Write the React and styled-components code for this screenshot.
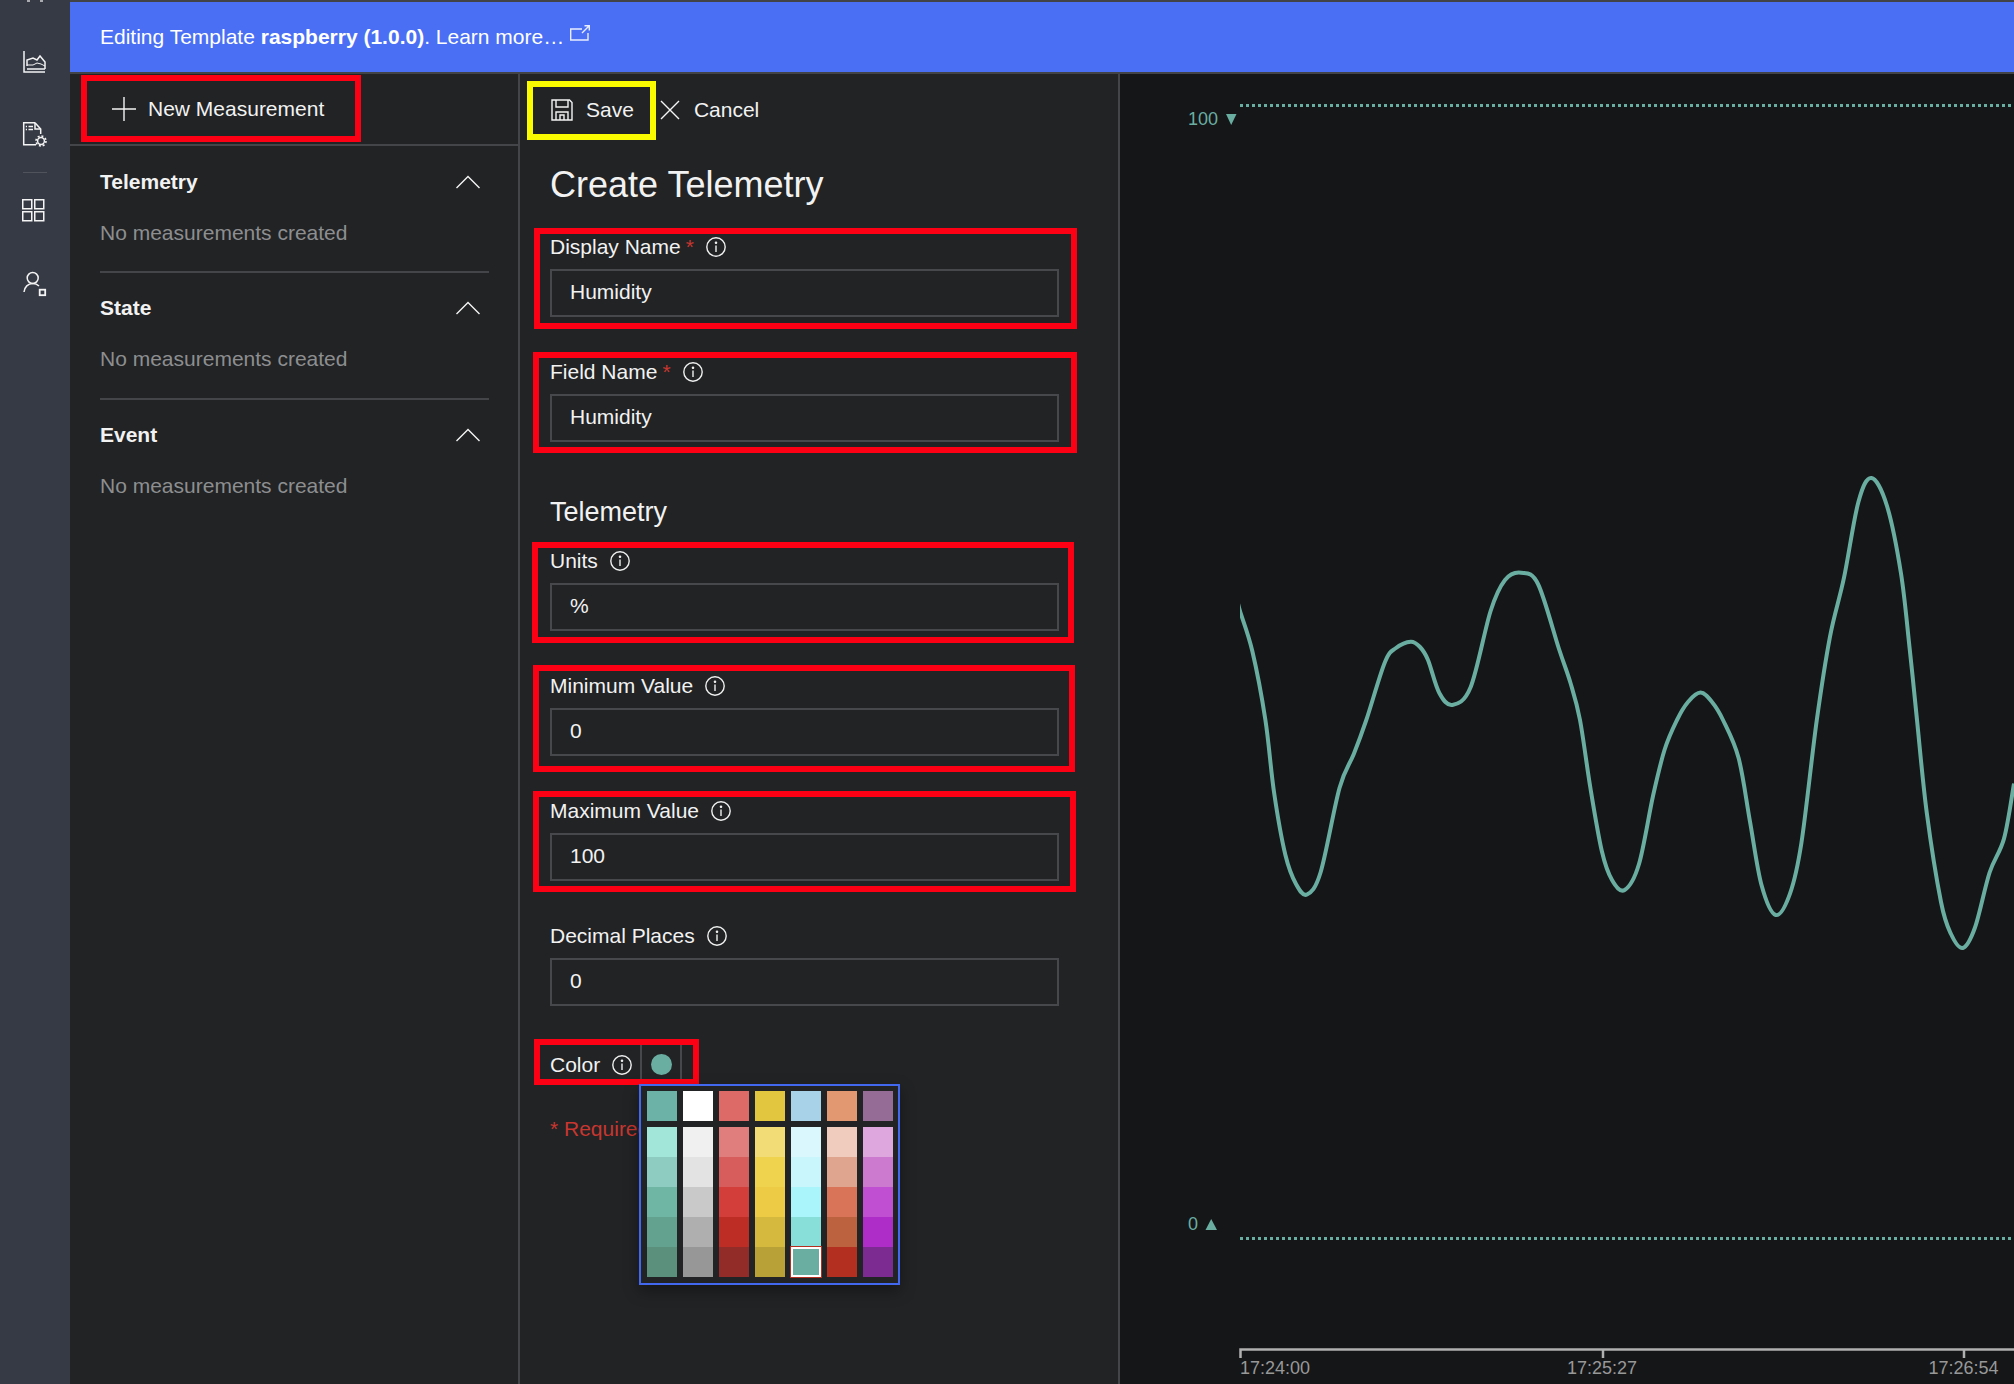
import React from "react";
import styled, { createGlobalStyle } from "styled-components";

const GlobalStyle = createGlobalStyle`
  html, body {
    margin: 0;
    padding: 0;
    background: #212325;
    font-family: "Liberation Sans", Arial, sans-serif;
  }
  * { box-sizing: border-box; }
`;

const Page = styled.div`
  display: flex;
  width: 2014px;
  height: 1384px;
  overflow: hidden;
  color: #f2f2f2;
  font-size: 21px;
`;

const Nav = styled.nav`
  display: flex;
  flex: 0 0 70px;
  flex-direction: column;
  align-items: center;
  background: #363a44;
`;

const NavItem = styled.div`
  display: flex;
  height: 73px;
  align-items: center;
  justify-content: center;
`;

const TopSliver = styled.div`
  display: flex;
  gap: 10px;
  height: 2px;
  margin-bottom: 22.5px;
`;

const SliverMark = styled.span`
  width: 3px;
  height: 2px;
  background: #a9abaf;
`;

const NavRule = styled.div`
  width: 24px;
  height: 1px;
  margin: 1px 0 2px;
  background: #50535b;
`;

const Main = styled.div`
  display: flex;
  flex: 1;
  flex-direction: column;
  min-width: 0;
`;

const Banner = styled.div`
  display: flex;
  flex: 0 0 74px;
  align-items: center;
  padding-left: 30px;
  border-top: 2px solid #414347;
  border-bottom: 2px solid #414347;
  background: #4a6ff4;
  color: #fff;

  b { white-space: pre; }
`;

const ExternalIcon = styled.svg`
  margin: -9px 0 0 6px;
`;

const Columns = styled.div`
  display: flex;
  flex: 1;
  min-height: 0;
`;

const LeftPanel = styled.aside`
  flex: 0 0 450px;
  border-right: 2px solid #444548;
  background: #212325;
`;

const LeftToolbar = styled.div`
  position: relative;
  display: flex;
  height: 72px;
  align-items: center;
  gap: 12px;
  padding-left: 42px;
  border-bottom: 2px solid #444548;
`;

const AccordionList = styled.div`
  padding: 1px 29px 0 30px;
`;

const Section = styled.section`
  height: 126px;
  border-bottom: ${(p) => (p.$last ? "none" : "2px solid #444548")};

  &:nth-child(2) { height: 127px; }
`;

const SectionHead = styled.div`
  display: flex;
  height: 70px;
  align-items: center;
  justify-content: space-between;
  padding-right: 9px;
  font-weight: 700;
`;

const EmptyNote = styled.div`
  margin-top: 2px;
  color: #8d8e90;
  line-height: 28px;
`;

const MiddlePanel = styled.div`
  flex: 0 0 600px;
  border-right: 2px solid #444548;
  background: #212325;
`;

const MiddleToolbar = styled.div`
  position: relative;
  display: flex;
  height: 72px;
  align-items: center;
  padding-left: 31px;
`;

const ToolButton = styled.div`
  display: flex;
  align-items: center;
  gap: ${(p) => p.$gap}px;
  margin-right: ${(p) => p.$after || 0}px;
`;

const Form = styled.div`
  padding: 17px 59px 0 30px;
`;

const Title = styled.h1`
  height: 44px;
  margin: 0 0 24px;
  font-size: 36px;
  font-weight: 400;
  line-height: 44px;
`;

const SubTitle = styled.h2`
  height: 36px;
  margin: 52px 0 15px;
  font-size: 27px;
  font-weight: 400;
  line-height: 36px;
`;

const Field = styled.div`
  position: relative;
  display: flex;
  height: 86px;
  flex-direction: column;
  gap: 6px;
  margin-bottom: 39px;

  &:has(+ h2) { margin-bottom: 0; }
`;

const LabelRow = styled.div`
  display: flex;
  height: 32px;
  align-items: center;
`;

const Required = styled.span`
  margin-left: 5px;
  color: #c8362f;
`;

const InfoIcon = styled.svg`
  flex: none;
  margin-left: 12px;
`;

const TextInput = styled.input`
  width: 100%;
  height: 48px;
  padding: 0 18px 2px;
  border: 2px solid #47484b;
  background: transparent;
  color: #f2f2f2;
  font: inherit;
  outline: none;
`;

const Highlight = styled.div`
  position: absolute;
  top: ${(p) => p.$top}px;
  right: ${(p) => p.$right}px;
  bottom: ${(p) => p.$bottom}px;
  left: ${(p) => p.$left}px;
  border: 6px solid ${(p) => p.$color || "#fe0013"};
  pointer-events: none;
`;

const ColorRow = styled.div`
  position: relative;
  display: flex;
  height: 40px;
  align-items: center;
  margin-top: 1px;
`;

const ColorButton = styled.div`
  display: flex;
  align-self: flex-start;
  width: 42px;
  height: 34px;
  align-items: center;
  justify-content: center;
  margin-left: 8px;
  padding-top: 4px;
  border-right: 2px solid #47484b;
  border-left: 2px solid #47484b;
`;

const ColorDot = styled.span`
  width: 21px;
  height: 21px;
  border-radius: 50%;
  background: #6aaea2;
`;

const Popup = styled.div`
  position: absolute;
  z-index: 2;
  top: 39px;
  left: 89px;
  width: 261px;
  height: 201px;
  padding: 5px 6px;
  border: 2px solid #4268f0;
  background: #212325;
  box-shadow: 0 6px 14px rgba(0, 0, 0, 0.35);
`;

const SwatchRow = styled.div`
  display: grid;
  grid-template-columns: repeat(7, 30px);
  column-gap: 6px;
  margin-bottom: 6px;
`;

const Ramp = styled.div`
  display: flex;
  flex-direction: column;
`;

const Swatch = styled.div`
  height: 30px;
  background: ${(p) => p.$color};
  ${(p) =>
    p.$selected &&
    `
    position: relative;
    z-index: 1;
    margin: -1px;
    height: 32px;
    border: 3px solid #fff;
    outline: 1px solid #b33020;
    outline-offset: -1px;
  `}
`;

const RequiredNote = styled.div`
  margin-top: 30px;
  color: #c8362f;
  line-height: 28px;
`;

const ChartPanel = styled.div`
  flex: 1;
  min-width: 0;
  background: #151618;
`;

const ChartSvg = styled.svg`
  display: block;
  width: 100%;
  height: 100%;
  font-size: 18px;
`;

const CURVE = [
  [1236, 594], [1239.7, 610], [1252.3, 651], [1265.4, 720], [1274, 792], [1285.4, 855], [1296, 884],
  [1307, 894.5], [1320.7, 872], [1339.5, 788], [1353.8, 754], [1366.3, 720], [1385, 662], [1396, 648],
  [1410.8, 641.7], [1420, 647], [1428, 660], [1439.3, 693], [1452.4, 705], [1470.7, 687], [1490.6, 611],
  [1505, 580], [1521, 572.7], [1538, 584], [1559, 649], [1570.5, 683], [1580, 720], [1590.4, 788],
  [1601.8, 851], [1612, 880], [1624.6, 890], [1639, 864], [1653, 796], [1664.5, 750], [1677, 720],
  [1688, 702], [1700.5, 692.6], [1712, 702], [1723, 720], [1738.6, 758], [1750, 821.6], [1761.5, 885],
  [1775.7, 915], [1790, 893.6], [1801.4, 843], [1816.8, 720], [1830, 636.6], [1844, 577.7],
  [1858.4, 502], [1871.5, 478], [1887, 506], [1901, 573.5], [1909.7, 649], [1917, 720], [1926.8, 813],
  [1941, 902], [1951, 934], [1962.8, 948], [1975, 927.5], [1989.6, 872.5], [2004, 838.6], [2014, 783.5],
];

// catmull-rom through the traced points
const smoothPath = (pts) => {
  let d = `M${pts[0][0]} ${pts[0][1]}`;
  for (let i = 0; i < pts.length - 1; i++) {
    const p0 = pts[i - 1] || pts[i];
    const p1 = pts[i];
    const p2 = pts[i + 1];
    const p3 = pts[i + 2] || p2;
    const c1x = p1[0] + (p2[0] - p0[0]) / 6;
    const c1y = p1[1] + (p2[1] - p0[1]) / 6;
    const c2x = p2[0] - (p3[0] - p1[0]) / 6;
    const c2y = p2[1] - (p3[1] - p1[1]) / 6;
    d += `C${c1x.toFixed(1)} ${c1y.toFixed(1)} ${c2x.toFixed(1)} ${c2y.toFixed(1)} ${p2[0]} ${p2[1]}`;
  }
  return d;
};

const TOP_SWATCHES = ["#6cb2a6", "#ffffff", "#dd6a66", "#e3c640", "#a8d2e8", "#e29870", "#956c96"];
const RAMPS = [
  ["#a2e6da", "#8ecbc1", "#6fb7a4", "#62a28f", "#5a907c"],
  ["#f0f0f0", "#e3e3e3", "#c9c9c9", "#afafaf", "#979797"],
  ["#e07e7e", "#d75c5c", "#d33e3a", "#be2c26", "#922c29"],
  ["#f2dc75", "#efd34e", "#eecb44", "#d4b93e", "#b8a237"],
  ["#dbf7fe", "#c9f6fc", "#aaf5fc", "#88dfd9", "#6aaea2"],
  ["#f0ccbe", "#e0a58e", "#d97458", "#bd623e", "#b33020"],
  ["#dea8df", "#cc7ad0", "#c04fd2", "#ae2cc8", "#7c2c90"],
];

const Icon = ({ size = 30, children, ...rest }) => (
  <svg
    width={size}
    height={size}
    viewBox={`0 0 ${size} ${size}`}
    fill="none"
    stroke="#f4f4f4"
    strokeWidth="1.5"
    {...rest}
  >
    {children}
  </svg>
);

const Info = () => (
  <InfoIcon width="20" height="20" viewBox="0 0 20 20" fill="none" stroke="#f0f0f0" strokeWidth="1.4">
    <circle cx="10" cy="10" r="9.2" />
    <path d="M10 8.5V15" />
    <circle cx="10" cy="5.8" r="0.6" fill="#f0f0f0" />
  </InfoIcon>
);

const Chevron = () => (
  <Icon size={24} strokeWidth="1.4" height="14" viewBox="0 0 24 14">
    <path d="M0.5 13L12 1.5L23.5 13" />
  </Icon>
);

const Accordion = ({ title, last }) => (
  <Section $last={last}>
    <SectionHead>
      {title}
      <Chevron />
    </SectionHead>
    <EmptyNote>No measurements created</EmptyNote>
  </Section>
);

const FormField = ({ label, required, value, box }) => (
  <Field>
    <LabelRow>
      {label}
      {required && <Required>*</Required>}
      <Info />
    </LabelRow>
    <TextInput readOnly value={value} />
    {box && <Highlight $top={box[0]} $right={box[1]} $bottom={box[2]} $left={box[3]} />}
  </Field>
);

const Chart = () => (
  <ChartSvg viewBox="1120 74 894 1310">
    <defs>
      <clipPath id="plot">
        <rect x="1240" y="74" width="774" height="1310" />
      </clipPath>
    </defs>
    <path d="M1240 105.5H2014M1240 1238.5H2014" stroke="#6aaea2" strokeWidth="3" strokeDasharray="3 3" />
    <path d={smoothPath(CURVE)} fill="none" stroke="#6aaea2" strokeWidth="4" clipPath="url(#plot)" />
    <g fill="#6aaea2">
      <text x="1188" y="125">100</text>
      <path d="M1226 114H1236.5L1231.2 125Z" />
      <text x="1188" y="1230">0</text>
      <path d="M1205.5 1230H1217L1211.2 1219Z" />
    </g>
    <path d="M1240.5 1358V1349.5H2014M1603 1349.5V1358M1964 1349.5V1358" fill="none" stroke="#b0b0b0" strokeWidth="2.5" />
    <g fill="#989898">
      <text x="1240" y="1374">17:24:00</text>
      <text x="1567" y="1374">17:25:27</text>
      <text x="1928.5" y="1374">17:26:54</text>
    </g>
  </ChartSvg>
);

export default function App() {
  return (
    <Page>
      <GlobalStyle />
      <Nav>
        <TopSliver>
          <SliverMark />
          <SliverMark />
        </TopSliver>
        <NavItem>
          <Icon>
            <path d="M4 5V26H25" />
            <path d="M7 23H25" />
            <path d="M7 20V14L13 12L17 14L20 10L25 16V23" />
            <path d="M7 19H13L17 17L21 18L25 20" strokeWidth="1" />
          </Icon>
        </NavItem>
        <NavItem>
          <Icon>
            <path d="M15 3.7H3.7V25.7H16" />
            <path d="M15 3.7L20.7 10V15" />
            <path d="M15 3.7V10H20.7" />
            <path d="M5.8 7.5H7M8.5 7.5H13M5.8 10.5H7M8.5 10.5H13" />
            <circle cx="21" cy="22" r="3.4" />
            <circle cx="21" cy="22" r="5" strokeWidth="1.6" strokeDasharray="2 1.9" />
          </Icon>
        </NavItem>
        <NavRule />
        <NavItem>
          <Icon>
            <rect x="2.75" y="3.75" width="9" height="9" />
            <rect x="14.75" y="3.75" width="9" height="9" />
            <rect x="2.75" y="15.75" width="9" height="9" />
            <rect x="14.75" y="15.75" width="9" height="9" />
          </Icon>
        </NavItem>
        <NavItem>
          <Icon>
            <circle cx="12.7" cy="9" r="5.5" />
            <path d="M4 23C4.5 18 8 14.5 12.7 14.5C15 14.5 17 15 19 17" />
            <rect x="19.7" y="20.7" width="5.5" height="5.5" strokeWidth="1.8" />
          </Icon>
        </NavItem>
      </Nav>
      <Main>
        <Banner>
          Editing Template&nbsp;<b>raspberry (1.0.0)</b>. Learn more…
          <ExternalIcon width="20" height="16" viewBox="0 0 20 16" fill="none" stroke="#e8edff" strokeWidth="1.4">
            <path d="M12 4H0.7V15H18V8" />
            <path d="M12 8L19 1M14.5 0.7H19.3V5.5" />
          </ExternalIcon>
        </Banner>
        <Columns>
          <LeftPanel>
            <LeftToolbar>
              <Icon size={24} strokeWidth="1.4">
                <path d="M12 0V24M0 12H24" />
              </Icon>
              New Measurement
              <Highlight $top={1} $right={157} $bottom={2} $left={11} />
            </LeftToolbar>
            <AccordionList>
              <Accordion title="Telemetry" />
              <Accordion title="State" />
              <Accordion title="Event" last />
            </AccordionList>
          </LeftPanel>
          <MiddlePanel>
            <MiddleToolbar>
              <ToolButton $gap={13} $after={26}>
                <Icon size={22} strokeWidth="1.4">
                  <path d="M1 1H18.5L21 3.5V21H1Z" />
                  <path d="M5 1V8H17V1" />
                  <path d="M5 21V13H17V21" />
                  <path d="M9 21V16H13V21" />
                </Icon>
                Save
              </ToolButton>
              <ToolButton $gap={14}>
                <Icon size={20} strokeWidth="1.4">
                  <path d="M1 1L19 19M19 1L1 19" />
                </Icon>
                Cancel
              </ToolButton>
              <Highlight $color="#fbfb00" $top={7} $right={462} $bottom={6} $left={7} />
            </MiddleToolbar>
            <Form>
              <Title>Create Telemetry</Title>
              <FormField label="Display Name" required value="Humidity" box={[-3, -18, -12, -16]} />
              <FormField label="Field Name" required value="Humidity" box={[-4, -18, -11, -17]} />
              <SubTitle>Telemetry</SubTitle>
              <FormField label="Units" value="%" box={[-3, -15, -12, -18]} />
              <FormField label="Minimum Value" value="0" box={[-5, -16, -16, -17]} />
              <FormField label="Maximum Value" value="100" box={[-4, -17, -11, -17]} />
              <FormField label="Decimal Places" value="0" />
              <ColorRow>
                Color
                <Info />
                <ColorButton>
                  <ColorDot />
                </ColorButton>
                <Highlight $top={-6} $right={360} $bottom={0} $left={-16} />
                <Popup>
                  <SwatchRow>
                    {TOP_SWATCHES.map((c) => (
                      <Swatch key={c} $color={c} />
                    ))}
                  </SwatchRow>
                  <SwatchRow>
                    {RAMPS.map((ramp) => (
                      <Ramp key={ramp[0]}>
                        {ramp.map((c) => (
                          <Swatch key={c} $color={c} $selected={c === "#6aaea2"} />
                        ))}
                      </Ramp>
                    ))}
                  </SwatchRow>
                </Popup>
              </ColorRow>
              <RequiredNote>* Required</RequiredNote>
            </Form>
          </MiddlePanel>
          <ChartPanel>
            <Chart />
          </ChartPanel>
        </Columns>
      </Main>
    </Page>
  );
}
